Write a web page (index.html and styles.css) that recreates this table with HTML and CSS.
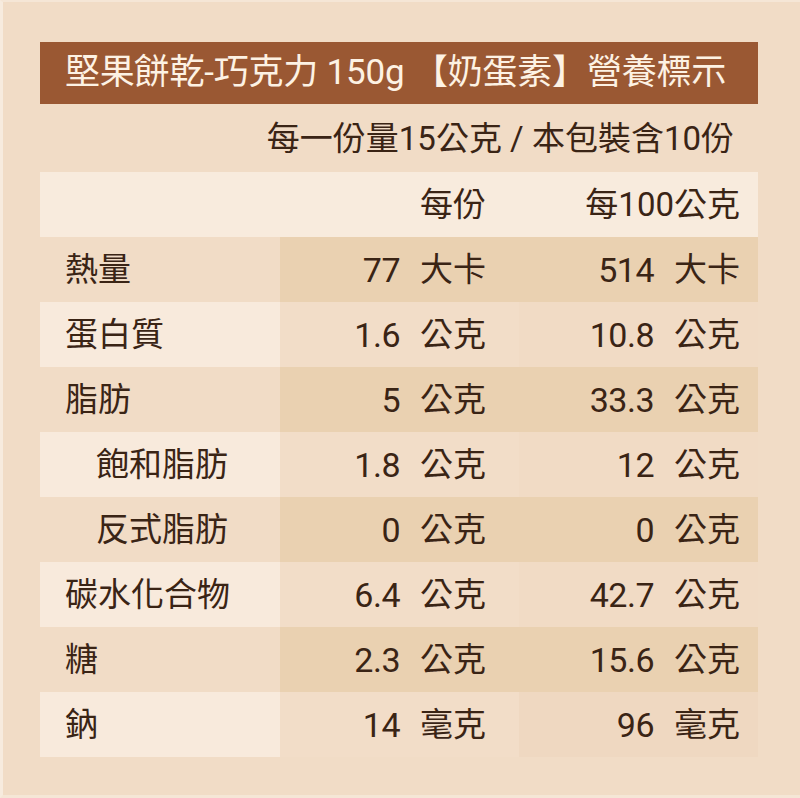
FILE: index.html
```html
<!DOCTYPE html>
<html lang="zh-Hant">
<head>
<meta charset="utf-8">
<title>營養標示</title>
<link rel="stylesheet" href="styles.css">
</head>
<body>
<div class="page">
  <div class="panel">
    <div class="title">堅果餅乾-巧克力 150g 【奶蛋素】營養標示</div>
    <div class="serving">每一份量15公克 / 本包裝含10份</div>
    <div class="table">
      <div class="cell head label"></div>
      <div class="cell head c2">每份</div>
      <div class="cell head c3">每100公克</div>

      <div class="cell label dark">熱量</div>
      <div class="cell c2 dark"><span class="num">77</span><span class="unit">大卡</span></div>
      <div class="cell c3 dark"><span class="num">514</span><span class="unit">大卡</span></div>

      <div class="cell label light">蛋白質</div>
      <div class="cell c2 light"><span class="num">1.6</span><span class="unit">公克</span></div>
      <div class="cell c3 light"><span class="num">10.8</span><span class="unit">公克</span></div>

      <div class="cell label dark">脂肪</div>
      <div class="cell c2 dark"><span class="num">5</span><span class="unit">公克</span></div>
      <div class="cell c3 dark"><span class="num">33.3</span><span class="unit">公克</span></div>

      <div class="cell label light indent">飽和脂肪</div>
      <div class="cell c2 light"><span class="num">1.8</span><span class="unit">公克</span></div>
      <div class="cell c3 light"><span class="num">12</span><span class="unit">公克</span></div>

      <div class="cell label dark indent">反式脂肪</div>
      <div class="cell c2 dark"><span class="num">0</span><span class="unit">公克</span></div>
      <div class="cell c3 dark"><span class="num">0</span><span class="unit">公克</span></div>

      <div class="cell label light">碳水化合物</div>
      <div class="cell c2 light"><span class="num">6.4</span><span class="unit">公克</span></div>
      <div class="cell c3 light"><span class="num">42.7</span><span class="unit">公克</span></div>

      <div class="cell label dark">糖</div>
      <div class="cell c2 dark"><span class="num">2.3</span><span class="unit">公克</span></div>
      <div class="cell c3 dark"><span class="num">15.6</span><span class="unit">公克</span></div>

      <div class="cell label light">鈉</div>
      <div class="cell c2 light"><span class="num">14</span><span class="unit">毫克</span></div>
      <div class="cell c3 light last"><span class="num">96</span><span class="unit">毫克</span></div>
    </div>
  </div>
</div>
</body>
</html>
```

FILE: styles.css
```css
html, body {
  margin: 0;
  padding: 0;
  background: #f1dcc6;
}

body {
  font-family: "Roboto", "Noto Sans CJK TC", sans-serif;
  font-weight: 400;
  color: #3a2415;
}

.page {
  box-sizing: border-box;
  width: 800px;
  height: 798px;
  border-left: 3px solid #f7ebde;
  border-top: 2px solid #f5e6d6;
  border-bottom: 3px solid #f5e6d6;
  background: #f1dcc6;
}

.panel {
  margin-left: 37px;
  padding-top: 40px;
  width: 718px;
}

.title {
  height: 62px;
  background: #9a5833;
  color: #fdf2e4;
  font-size: 35px;
  line-height: 62px;
  padding-left: 25px;
  white-space: nowrap;
  letter-spacing: -0.2px;
}

.serving {
  height: 68px;
  display: flex;
  align-items: center;
  justify-content: flex-end;
  padding-right: 24px;
  font-size: 33px;
  line-height: 1;
}

.table {
  display: grid;
  grid-template-columns: 240px 239px 239px;
  grid-auto-rows: 65px;
}

.cell {
  display: flex;
  align-items: center;
  font-size: 33px;
  line-height: 1;
  white-space: nowrap;
}

.num {
  font-size: 34px;
  letter-spacing: -0.5px;
}

.head {
  background: #f8ebdd;
}

.label {
  padding-left: 25px;
}

.label.indent {
  padding-left: 56px;
}

.c2 {
  justify-content: flex-end;
  padding-right: 33px;
}

.c3 {
  justify-content: flex-end;
  padding-right: 18px;
}

.unit {
  margin-left: 20px;
}

.label.light {
  background: #f8eadc;
}

.label.dark {
  background: transparent;
}

.c2.dark,
.c3.dark {
  background: #ead1b1;
}

.c2.light {
  background: #f2ddc8;
}

.c3.light {
  background: #f1dbc5;
}

.c3.last {
  background: #efd8c1;
}
```
